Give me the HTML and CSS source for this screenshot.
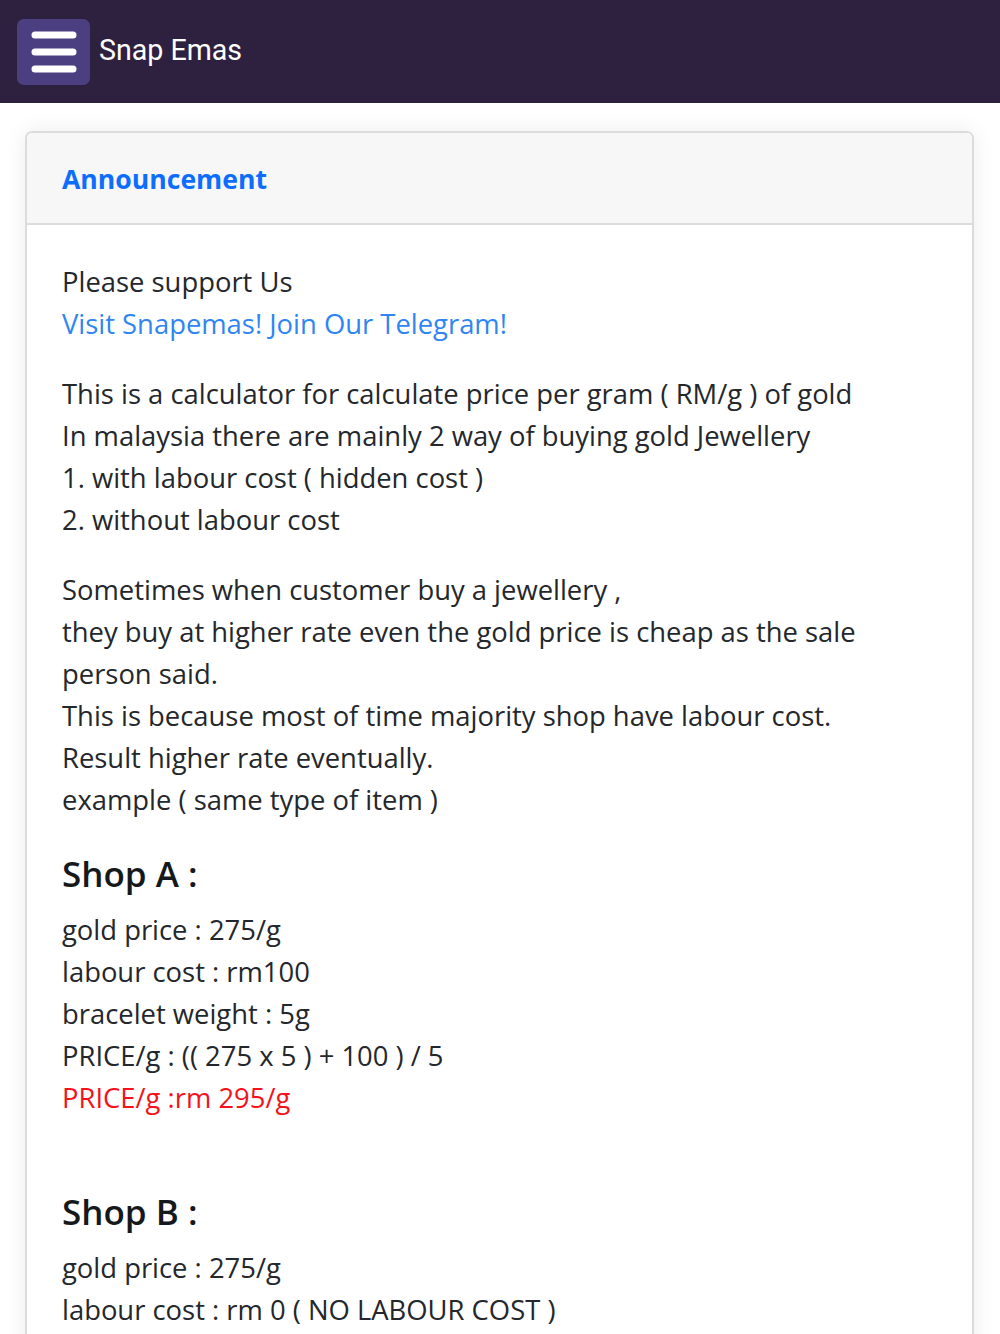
FILE: index.html
```html
<!DOCTYPE html>
<html lang="en">
<head>
<meta charset="utf-8">
<title>Snap Emas</title>
<link rel="stylesheet" href="styles.css">
</head>
<body>
<nav class="navbar">
  <button class="toggler" aria-label="menu">
    <svg width="46" height="44" viewBox="0 0 46 44"><g stroke="#fff" stroke-width="7" stroke-linecap="round"><line x1="4" y1="5" x2="42" y2="5"/><line x1="4" y1="22" x2="42" y2="22"/><line x1="4" y1="39" x2="42" y2="39"/></g></svg>
  </button>
  <span class="brand">Snap Emas</span>
</nav>
<main class="container">
  <section class="card">
    <header class="card-header"><span class="card-title">Announcement</span></header>
    <div class="card-body">
      <p>Please support Us<br><a class="link" href="#">Visit Snapemas! Join Our Telegram!</a></p>
      <p>This is a calculator for calculate price per gram ( RM/g ) of gold<br>In malaysia there are mainly 2 way of buying gold Jewellery<br>1. with labour cost ( hidden cost )<br>2. without labour cost</p>
      <p>Sometimes when customer buy a jewellery ,<br>they buy at higher rate even the gold price is cheap as the sale person said.<br>This is because most of time majority shop have labour cost.<br>Result higher rate eventually.<br>example ( same type of item )</p>
      <h5 class="shop">Shop A :</h5>
      <p>gold price : 275/g<br>labour cost : rm100<br>bracelet weight : 5g<br>PRICE/g : (( 275 x 5 ) + 100 ) / 5<br><span class="red">PRICE/g :rm 295/g</span></p>
      <div class="spacer"></div>
      <h5 class="shop">Shop B :</h5>
      <p>gold price : 275/g<br>labour cost : rm 0 ( NO LABOUR COST )</p>
    </div>
  </section>
</main>
</body>
</html>
```
FILE: styles.css
```css
* { box-sizing: border-box; }
html, body { margin: 0; padding: 0; }
body {
  font-family: "Open Sans", "Noto Sans", sans-serif;
  font-size: 27.4px;
  line-height: 42px;
  color: #24272b;
  background: #fff;
}
.navbar {
  height: 103px;
  background: #2e2140;
  display: flex;
  align-items: center;
  padding: 0 17px;
  gap: 9px;
}
.toggler {
  width: 73px;
  height: 66px;
  background: #4b3f82;
  border: none;
  border-radius: 7px;
  display: flex;
  align-items: center;
  justify-content: center;
  padding: 0;
}
.brand {
  font-family: Roboto, "Liberation Sans", sans-serif;
  font-size: 28.6px;
  color: #fff;
  line-height: 1;
  margin-top: -3px;
}
.container {
  padding: 28px 26px 0 25px;
}
.card {
  border: 2px solid #dcdcdc;
  border-radius: 7px;
  box-shadow: 0 0 22px rgba(0,0,0,0.08);
  overflow: hidden;
}
.card-header {
  height: 92px;
  background: #f7f7f7;
  border-bottom: 2px solid #dcdcdc;
  display: flex;
  align-items: center;
  padding: 2px 35px 0;
}
.card-title {
  color: #0d6efd;
  font-weight: 700;
  font-size: 26.6px;
}
.card-body {
  padding: 36px 35px 40px 35px;
}
p { margin: 0 0 28px; }
.link { color: #2f86f2; text-decoration: none; }
.shop {
  font-size: 35px;
  font-weight: 600;
  line-height: 42px;
  padding-top: 4px;
  margin: 0 0 14px;
  color: #16191c;
}
.red { color: #f4131b; }
.spacer { height: 40px; }
```
